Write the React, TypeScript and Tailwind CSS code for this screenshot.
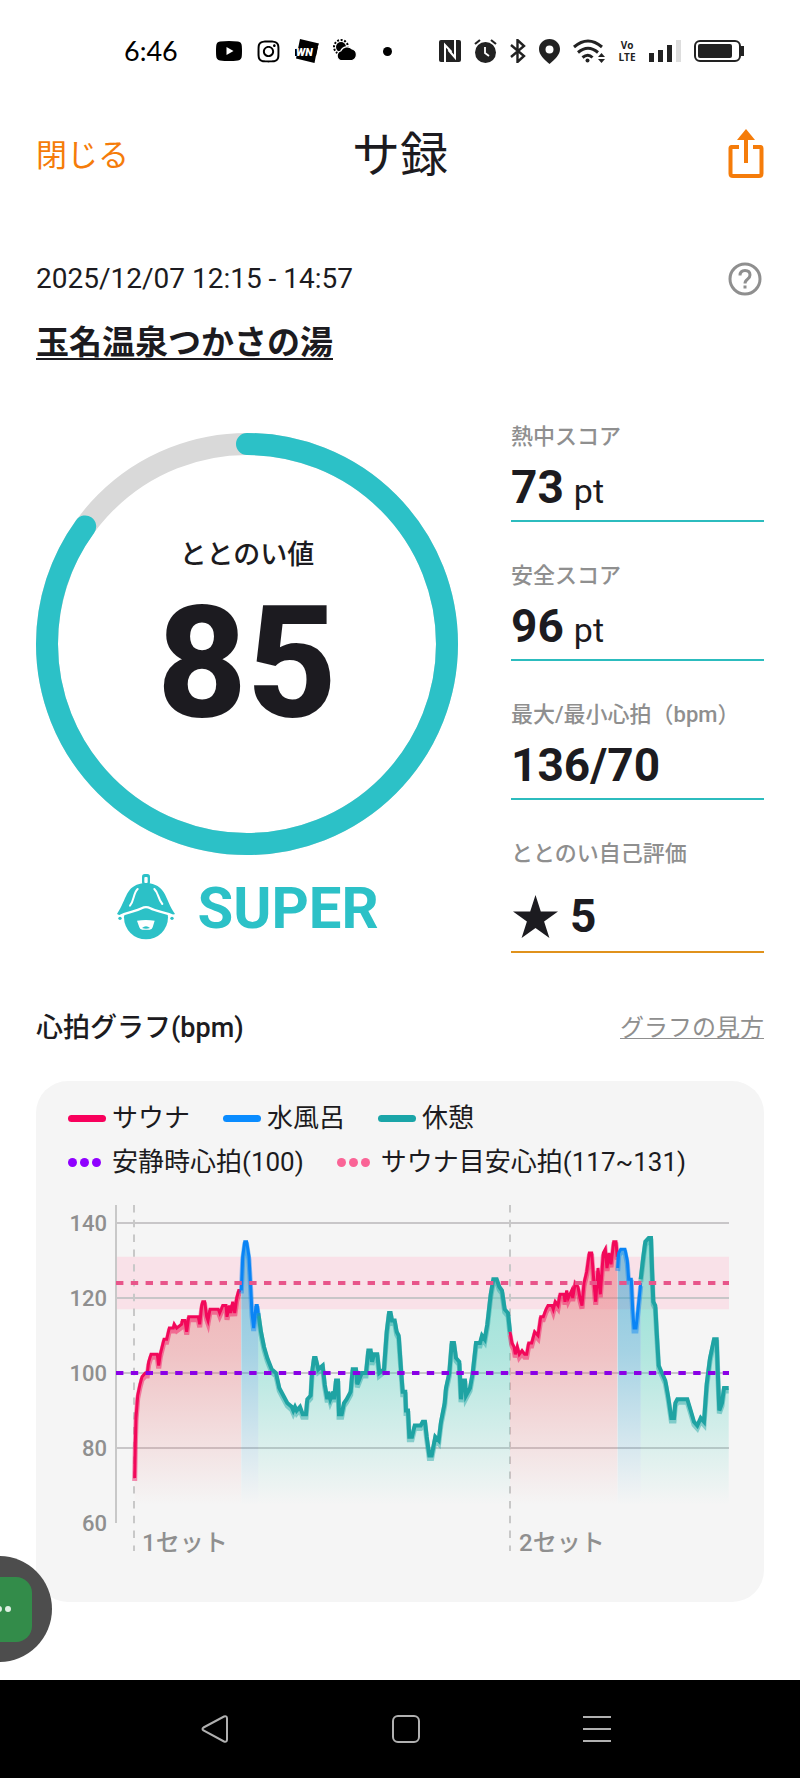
import React from 'react'
import { FaInstagram } from 'react-icons/fa'

type Point = [number, number]
type Phase = 'sauna' | 'cold' | 'rest'

interface Segment {
  phase: Phase
  points: Point[]
}

interface Score {
  label: string
  value: string
  unit?: string
}

const scores: Score[] = [
  { label: '熱中スコア', value: '73', unit: 'pt' },
  { label: '安全スコア', value: '96', unit: 'pt' },
  { label: '最大/最小心拍（bpm）', value: '136/70' }
]

// [経過時間, 心拍数]
const segments: Segment[] = [
  {
    phase: 'rest',
    points: [
      [427, 116], [435, 111], [444, 107], [454, 104], [467, 101], [480, 100], [490, 96], [502, 94], [514, 92],
      [527, 91], [532, 90], [537, 91], [542, 90], [552, 91], [560, 89], [570, 89], [574, 93], [584, 94], [588, 100],
      [594, 104], [599, 104], [607, 101], [620, 102], [626, 97], [634, 93], [637, 95], [643, 93], [652, 95],
      [654, 93], [660, 98], [666, 98], [669, 89], [677, 89], [684, 92], [692, 93], [704, 95], [710, 101], [720, 101],
      [724, 97], [737, 100], [750, 100], [757, 106], [764, 106], [768, 103], [774, 105], [784, 105], [790, 100],
      [804, 101], [812, 111], [819, 116], [824, 116], [828, 114], [836, 114], [842, 111], [848, 110], [856, 100],
      [860, 95], [868, 95], [870, 90], [876, 90], [880, 83], [888, 83], [896, 86], [914, 86], [920, 87], [927, 87],
      [932, 83], [940, 78], [947, 78], [958, 83], [968, 82], [975, 87], [986, 92], [990, 96], [1000, 100],
      [1007, 108], [1014, 108], [1020, 104], [1030, 103], [1035, 93], [1040, 98], [1047, 98], [1050, 94],
      [1062, 96], [1070, 100], [1080, 108], [1092, 108], [1098, 110], [1106, 109], [1114, 113], [1124, 121],
      [1132, 125], [1142, 125], [1150, 123], [1158, 122], [1166, 117], [1176, 116], [1182, 111]
    ]
  },
  {
    phase: 'rest',
    points: [
      [1574, 125], [1582, 131], [1588, 135], [1598, 136], [1605, 136], [1608, 128], [1612, 119], [1618, 118],
      [1622, 111], [1628, 102], [1638, 100], [1648, 98], [1656, 94], [1666, 88], [1674, 88], [1678, 92],
      [1684, 93], [1714, 93], [1724, 90], [1734, 87], [1744, 86], [1754, 88], [1764, 87], [1772, 97], [1782, 104],
      [1794, 109], [1802, 109], [1806, 99], [1810, 90], [1818, 92], [1824, 96], [1838, 96]
    ]
  },
  {
    phase: 'sauna',
    points: [
      [56, 72], [58, 81], [60, 88], [65, 94], [72, 97], [78, 99], [88, 100], [94, 100], [98, 103], [105, 105],
      [124, 105], [128, 102], [133, 105], [144, 109], [152, 109], [160, 112], [172, 112], [175, 113], [182, 112],
      [197, 113], [199, 114], [207, 114], [212, 111], [218, 115], [238, 115], [247, 115], [251, 113], [257, 118],
      [260, 119], [266, 119], [272, 115], [276, 114], [282, 117], [307, 117], [311, 116], [316, 117], [320, 118],
      [330, 118], [333, 115], [340, 118], [344, 116], [350, 119], [356, 116], [362, 120], [368, 122], [375, 122]
    ]
  },
  {
    phase: 'sauna',
    points: [
      [1182, 111], [1188, 108], [1194, 107], [1198, 105], [1204, 107], [1210, 105], [1218, 106], [1226, 105],
      [1232, 105], [1238, 108], [1247, 108], [1256, 111], [1266, 110], [1274, 115], [1282, 115], [1290, 117],
      [1296, 118], [1308, 118], [1312, 117], [1318, 119], [1326, 118], [1332, 121], [1344, 121], [1347, 119],
      [1352, 122], [1357, 120], [1367, 122], [1370, 120], [1378, 124], [1386, 123], [1392, 120], [1398, 118],
      [1404, 124], [1412, 127], [1420, 132], [1427, 132], [1433, 125], [1439, 119], [1446, 128], [1453, 121],
      [1462, 132], [1468, 133], [1473, 128], [1479, 132], [1485, 129], [1493, 135], [1500, 135], [1504, 131]
    ]
  },
  {
    phase: 'cold',
    points: [
      [376, 122], [380, 131], [386, 135], [392, 135], [399, 131], [404, 123], [408, 116], [413, 112], [420, 118],
      [424, 118], [427, 116]
    ]
  },
  {
    phase: 'cold',
    points: [
      [1505, 128], [1508, 132], [1514, 133], [1527, 133], [1534, 130], [1538, 125], [1546, 125], [1550, 117],
      [1554, 112], [1560, 112], [1566, 117], [1572, 122], [1574, 124]
    ]
  }
]

const colors: Record<Phase, string> = {
  sauna: '#f2085a',
  cold: '#0a84f5',
  rest: '#1fa3a3'
}

const fills: Record<Phase, string> = {
  sauna: '#e8777c',
  cold: '#2f9fcb',
  rest: '#4bd0bd'
}

const toX = (t: number) => Math.round((80 + t / 3) * 10) / 10
const toY = (bpm: number) => 33 + (140 - bpm) * 3.75
const toLine = (points: Point[]) => points.map(([t, bpm]) => `${toX(t)},${toY(bpm)}`).join(' ')

const StatusBar: React.FC = () => (
  <div className="flex h-[102px] items-center justify-between pl-[124px] pr-14 text-[#222]">
    <div className="flex items-center gap-3.5 text-black">
      <span className="mr-6 font-[Lato,sans-serif] text-[27px] leading-8">6:46</span>
      <svg className="h-5 w-[26px]" viewBox="0 0 26 20">
        <path d="M4 .6Q13-.4 22 .6 25.6 1 25.8 5q.4 5 0 10-.2 4-3.800 4.400-9 1-18 0Q.4 19 .2 15q-.4-5 0-10Q.4 1 4 .6z" fill="currentColor" />
        <path d="M10.500 6v8l7-4z" fill="#fff" />
      </svg>
      <FaInstagram className="size-[25px]" />
      <svg className="size-6" viewBox="0 0 24 24">
        <path d="M5 0l19 4.500-1.500 4L19.500 24 1 19.500z" fill="currentColor" />
        <path d="M0 10l23-2-2 9H0z" fill="currentColor" />
        <text x="1" y="17" fontSize="11" fontWeight="900" fontStyle="italic" fill="#fff" className="font-[Roboto,sans-serif]">WN</text>
      </svg>
      <svg className="size-6" viewBox="0 0 24 24">
        <circle cx="8" cy="8" r="7" fill="none" stroke="currentColor" strokeWidth="2" strokeDasharray="2 1.600" />
        <circle cx="8" cy="8" r="5" fill="currentColor" />
        <path d="M7.500 21.500a5 5 0 0 1 .2-9.500 7 7 0 0 1 11.500-2A6 6 0 0 1 19 21.500z" fill="currentColor" stroke="#fff" strokeWidth="1.200" />
      </svg>
      <span className="ml-3 size-[9px] rounded-full bg-black" />
    </div>
    <div className="flex items-center gap-[13px]">
      <svg className="size-[22px]" viewBox="0 0 22 22">
        <rect width="22" height="22" rx="2" fill="currentColor" />
        <path d="M6 22V5l6.500 7M16 0v17.500L9.500 10" fill="none" stroke="#fff" strokeWidth="2" />
      </svg>
      <svg className="h-6 w-[23px]" viewBox="0 0 23 24">
        <circle cx="11.500" cy="13.500" r="10.500" fill="currentColor" />
        <path d="M1 5l5-4M22 5l-5-4" stroke="currentColor" strokeWidth="2.200" />
        <path d="M11 8v6l4 3" fill="none" stroke="#fff" strokeWidth="1.800" />
      </svg>
      <svg className="h-6 w-4" viewBox="0 0 16 24">
        <path d="M1 6l13 11-6.500 6V1L14 7 1 18" fill="none" stroke="currentColor" strokeWidth="2.400" />
      </svg>
      <svg className="h-[25px] w-[21px]" viewBox="0 0 21 25">
        <path fillRule="evenodd" d="M10.500 0C4.500 0 0 4.500 0 10c0 6 5 10 10.500 15C16 20 21 16 21 10 21 4.500 16.500 0 10.500 0zm0 6.500a4 4 0 1 1 0 8 4 4 0 0 1 0-8z" fill="currentColor" />
      </svg>
      <svg className="h-6 w-8" viewBox="0 0 32 24">
        <g fill="none" stroke="currentColor" strokeWidth="3">
          <path d="M1 8Q15-4 29 8" />
          <path d="M5 13.500q10-8.500 20 0" />
          <path d="M9.500 18.500q5.500-4.500 10 0" />
        </g>
        <circle cx="14.500" cy="21.500" r="2" fill="currentColor" />
        <path d="M25 18l3.500-4 3.500 4zM25 20h7l-3.500 4z" fill="currentColor" />
      </svg>
      <span className="flex w-[18px] flex-col items-center font-['Open_Sans',sans-serif] text-[10px] font-bold leading-3">
        <span>Vo</span>
        <span>LTE</span>
      </span>
      <svg className="h-[22px] w-8" viewBox="0 0 32 22">
        <path d="M0 13h5v9H0zM9 10h5v12H9zM18 5h5v17h-5z" fill="currentColor" />
        <path d="M27 0h5v22h-5z" fill="#ddd" />
      </svg>
      <svg className="h-[22px] w-[50px]" viewBox="0 0 50 22">
        <rect x="1" y="1" width="45" height="20" rx="5" fill="none" stroke="currentColor" strokeWidth="2" />
        <rect x="4" y="4" width="34" height="14" rx="2" fill="currentColor" />
        <path d="M47 6h3v10h-3z" fill="currentColor" />
      </svg>
    </div>
  </div>
)

const SaunaHatIcon: React.FC = () => (
  <svg className="h-[66px] w-[58px]" viewBox="28 38 174 198">
    <circle cx="115" cy="168" r="66" fill="#2cc1c7" />
    <path d="M28 158C60 110 52 76 104 66h22c52 10 46 50 76 92l-10 4c-24-12-46-8-66-20q-11-6-22 0c-24 12-44 8-68 20z" fill="#2cc1c7" />
    <path d="M32 166c30-16 50-14 70-25q13-7 26 0c20 11 42 10 70 23" fill="none" stroke="#fff" strokeWidth="7" />
    <path d="M90 83c-14 14-10 34-23 50M140 83c14 14 10 28 24 45" fill="none" stroke="#fff" strokeWidth="6" strokeLinecap="round" />
    <rect x="103" y="38" width="24" height="32" rx="8" fill="#2cc1c7" />
    <rect x="110" y="47" width="10" height="18" rx="3" fill="#fff" />
    <path d="M88 178q27-4 53 0l-6 20q-2 7-9 7h-22q-7 0-9-7z" fill="#fff" />
    <path d="M103 200q12-10 24 0-12 5-24 0z" fill="#2cc1c7" />
    <circle cx="37" cy="171" r="5" fill="#2cc1c7" />
    <circle cx="193" cy="171" r="5" fill="#2cc1c7" />
  </svg>
)

const ScoreRing: React.FC<{ score: number }> = ({ score }) => (
  <div className="relative mt-[11px]">
    <svg className="block w-full" viewBox="0 0 422 422">
      <circle cx="211" cy="211" r="200" fill="none" stroke="#d9d9d9" strokeWidth="22" />
      <circle
        cx="211"
        cy="211"
        r="200"
        fill="none"
        stroke="#2cc1c7"
        strokeWidth="22"
        strokeLinecap="round"
        pathLength={100}
        strokeDasharray={`${score} 100`}
        transform="rotate(-90 211 211)"
      />
    </svg>
    <div className="absolute inset-0 flex flex-col items-center pt-[102px]">
      <p className="text-[27px] font-medium leading-10">ととのい値</p>
      <p className="mt-2.5 text-[156px] font-extrabold leading-[156px]">{score}</p>
    </div>
  </div>
)

const LegendLine: React.FC<{ className: string; label: string }> = ({ className, label }) => (
  <li className="flex items-center gap-1.5">
    <span className={`h-[7px] w-[38px] rounded-sm ${className}`} />
    {label}
  </li>
)

const LegendDots: React.FC<{ className: string; label: string }> = ({ className, label }) => (
  <li className="flex items-center gap-[11px]">
    <span className="flex gap-[3px]">
      {[0, 1, 2].map(i => (
        <span key={i} className={`size-[9px] rounded-full ${className}`} />
      ))}
    </span>
    {label}
  </li>
)

const HeartRateChart: React.FC = () => (
  <svg className="mt-2.5 block w-full" viewBox="0 0 728 380" role="img" aria-label="心拍グラフ">
    <defs>
      {(Object.keys(fills) as Phase[]).map(phase => (
        <linearGradient key={phase} id={`fill-${phase}`} gradientUnits="userSpaceOnUse" x1="0" y1="40" x2="0" y2="315">
          <stop offset="0" stopColor={fills[phase]} stopOpacity="0.6" />
          <stop offset="0.45" stopColor={fills[phase]} stopOpacity="0.4" />
          <stop offset="1" stopColor={fills[phase]} stopOpacity="0" />
        </linearGradient>
      ))}
    </defs>

    {/* 目盛り */}
    <rect x="80" y={toY(131)} width="613" height={toY(117) - toY(131)} fill="#f9e1e8" />
    {[140, 120, 100, 80].map(bpm => (
      <path key={bpm} d={`M80 ${toY(bpm)}H693`} stroke="#c8c6c8" strokeWidth="2" />
    ))}
    <path d="M80 15V333" stroke="#c8c8c8" strokeWidth="2" />
    <path d="M98 15V361M474 15V361" stroke="#c8c8c8" strokeWidth="2" strokeDasharray="7.400 7.400" />
    {[140, 120, 100, 80, 60].map(bpm => (
      <text key={bpm} x="71" y={toY(bpm) + 8} textAnchor="end" className="fill-[#8f8f8f] text-[22px] font-medium">
        {bpm}
      </text>
    ))}

    {/* 心拍 */}
    {segments.map(({ phase, points }, index) => {
      const startX = toX(points[0][0])
      const endX = toX(points[points.length - 1][0])
      return (
        <g key={index}>
          <polygon points={`${startX},315 ${toLine(points)} ${endX},315`} fill={`url(#fill-${phase})`} />
          <polyline points={toLine(points)} fill="none" stroke={colors[phase]} strokeWidth="5" strokeOpacity="0.45" transform="translate(0 3)" />
          <polyline points={toLine(points)} fill="none" stroke={colors[phase]} strokeWidth={phase === 'rest' ? 4 : 3} />
        </g>
      )
    })}

    <path d={`M80 ${toY(124)}H693`} stroke="#e8558a" strokeWidth="4" strokeDasharray="7.400 7.400" />
    <path d={`M80 ${toY(100)}H693`} stroke="#8a00e6" strokeWidth="4" strokeDasharray="7.400 7.400" />

    <text x="106" y="361" className="fill-[#8f8f8f] text-[24px] font-medium">1セット</text>
    <text x="483" y="361" className="fill-[#8f8f8f] text-[24px] font-medium">2セット</text>
  </svg>
)

const App: React.FC = () => {
  return (
    <div className="relative flex min-h-screen flex-col overflow-hidden bg-white font-[Roboto,'Noto_Sans_CJK_JP',sans-serif] text-[#1c1b20]">
      <StatusBar />

      <header className="grid h-[104px] grid-cols-[1fr_auto_1fr] items-center px-9">
        <button type="button" className="justify-self-start pt-1 text-[31px] leading-10 text-[#f57c0a]">閉じる</button>
        <h1 className="pt-1 text-[48px] leading-[60px]">サ録</h1>
        <button type="button" aria-label="共有" className="justify-self-end">
          <svg className="h-[50px] w-9" viewBox="0 0 36 50">
            <path d="M11 18H3.500Q2.500 18 2.500 19.500V44.500Q2.500 47 5 47H31Q33.500 47 33.500 44.500V19.500Q33.500 18 32.500 18H25" fill="none" stroke="#f57c0a" strokeWidth="4" />
            <path d="M18 8V34" stroke="#f57c0a" strokeWidth="4" />
            <path d="M18 0l9 11H9z" fill="#f57c0a" />
          </svg>
        </button>
      </header>

      <main className="px-9 pb-[78px]">
        <div className="mt-14 flex items-center justify-between">
          <p className="text-[28px] leading-[34px]">2025/12/07 12:15 - 14:57</p>
          <button type="button" aria-label="ヘルプ" className="mr-0.5">
            <svg className="size-[34px]" viewBox="0 0 34 34" fill="none" stroke="#8f8f8f" strokeWidth="3">
              <circle cx="17" cy="17" r="15" />
              <path d="M12 13.500Q12 8.500 17 8.500T22 13q0 2.500-2.500 4.200T17 21.500" />
              <path d="M17 23.500v3" />
            </svg>
          </button>
        </div>
        <a href="#facility" className="mt-[25px] inline-block text-[33px] font-bold leading-[44px] underline decoration-2 underline-offset-4">
          玉名温泉つかさの湯
        </a>

        <section className="mt-[57px] grid grid-cols-[422fr_253fr] gap-[53px]">
          <div>
            <ScoreRing score={85} />
            <div className="mt-[18px] flex items-center justify-center gap-[22px] pl-0.5 text-[#2cc1c7]">
              <SaunaHatIcon />
              <span className="pt-0.5 text-[58px] font-bold leading-[66px]">SUPER</span>
            </div>
          </div>

          <dl className="flex flex-col gap-[39px]">
            {scores.map(({ label, value, unit }) => (
              <div key={label} className="border-b-2 border-[#2cbcbe] pb-1.5">
                <dt className="whitespace-nowrap text-[22px] font-medium leading-[30px] text-[#8f8f8f]">{label}</dt>
                <dd className="mt-2 flex items-baseline gap-2.5 text-[46px] font-bold leading-[54px]">
                  {value}
                  {unit && <span className="text-[34px] font-normal leading-none">{unit}</span>}
                </dd>
              </div>
            ))}
            <div className="border-b-2 border-[#e0921c] pb-2">
              <dt className="text-[22px] font-medium leading-[30px] text-[#8f8f8f]">ととのい自己評価</dt>
              <dd className="mt-5 flex items-center gap-3 text-[46px] font-bold leading-[54px]">
                <svg className="ml-0.5 h-[43px] w-[45px]" viewBox="0 0 45 43">
                  <path d="M22.500 0l5.300 16.400H45L31.100 26.600 36.400 43 22.500 32.900 8.600 43l5.300-16.400L0 16.400h17.200z" fill="currentColor" />
                </svg>
                5
              </dd>
            </div>
          </dl>
        </section>

        <section>
          <div className="mt-[55px] flex items-center justify-between">
            <h2 className="text-[27px] font-medium leading-10">心拍グラフ(bpm)</h2>
            <a href="#guide" className="text-[24px] leading-10 text-[#8f8f8f] underline decoration-1 underline-offset-2">グラフの見方</a>
          </div>

          <div className="mt-[33px] rounded-[32px] bg-[#f5f5f5] pb-8 pt-[19px]">
            <ul className="flex flex-wrap gap-x-[33px] px-8 text-[26px] leading-9">
              <LegendLine className="bg-[#f8005c]" label="サウナ" />
              <LegendLine className="bg-[#0a8cff]" label="水風呂" />
              <LegendLine className="bg-[#1aa5a8]" label="休憩" />
            </ul>
            <ul className="mt-2 flex flex-wrap gap-x-[33px] px-8 text-[26px] leading-9">
              <LegendDots className="bg-[#8f00ff]" label="安静時心拍(100)" />
              <LegendDots className="bg-[#fa6496]" label="サウナ目安心拍(117~131)" />
            </ul>
            <HeartRateChart />
          </div>
        </section>
      </main>

      {/* フローティングボタン */}
      <button
        type="button"
        aria-label="メニュー"
        className="absolute -left-[54px] bottom-[116px] flex size-[106px] items-center justify-center rounded-full bg-[#4d4d4d]"
      >
        <span className="flex size-[65px] items-center justify-center gap-[3px] rounded-2xl bg-[#338c4a]">
          <span className="size-1.5 rounded-full bg-[#dff0e3]" />
          <span className="size-1.5 rounded-full bg-[#dff0e3]" />
          <span className="size-1.5 rounded-full bg-[#dff0e3]" />
        </span>
      </button>

      <nav className="mt-auto grid h-[98px] grid-cols-3 items-center justify-items-center bg-black pl-[119px] pr-[107px]">
        <button type="button" aria-label="戻る">
          <svg className="size-7" viewBox="0 0 28 28">
            <path d="M2.500 12.500L23 1.500q3-1 3 2v21q0 3-3 2L2.500 15.500q-2-1.500 0-3z" fill="none" stroke="#b0b0b0" strokeWidth="2" />
          </svg>
        </button>
        <button type="button" aria-label="ホーム">
          <svg className="size-7" viewBox="0 0 28 28">
            <rect x="1" y="1" width="26" height="26" rx="5" fill="none" stroke="#b0b0b0" strokeWidth="2" />
          </svg>
        </button>
        <button type="button" aria-label="履歴">
          <svg className="size-7" viewBox="0 0 28 28">
            <path d="M0 2h28M0 14h28M0 26h28" stroke="#b0b0b0" strokeWidth="2" />
          </svg>
        </button>
      </nav>
    </div>
  )
}

export default App
